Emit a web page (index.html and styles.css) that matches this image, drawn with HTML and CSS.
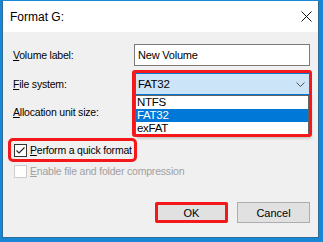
FILE: index.html
```html
<!DOCTYPE html>
<html lang="en">
<head>
  <meta charset="UTF-8" />
  <title>Format G:</title>
  <link rel="stylesheet" href="styles.css">
</head>
<body>
  <div class="window">
    <div class="titlebar">
      <span class="title">Format G:</span>
      <svg class="close" width="11" height="11" viewBox="0 0 11 11">
        <path d="M0.5 0.5 L10.5 10.5 M10.5 0.5 L0.5 10.5" stroke="#111" stroke-width="1" fill="none"/>
      </svg>
    </div>

    <div class="content">
      <div class="row row-volume">
        <label class="label"><u>V</u>olume label:</label>
        <div class="textbox">New Volume</div>
      </div>

      <div class="row row-fs">
        <label class="label"><u>F</u>ile system:</label>
        <div class="combo-wrap">
          <div class="combo">
            <span>FAT32</span>
            <svg class="chevron" width="9" height="5" viewBox="0 0 9 5">
              <path d="M0.5 0.5 L4.5 4.5 L8.5 0.5" stroke="#555" stroke-width="1" fill="none"/>
            </svg>
          </div>
          <ul class="dropdown">
            <li>NTFS</li>
            <li class="selected">FAT32</li>
            <li>exFAT</li>
          </ul>
        </div>
      </div>

      <div class="row row-alloc">
        <label class="label"><u>A</u>llocation unit size:</label>
      </div>

      <div class="row row-quick">
        <label class="check highlight">
          <span class="box checked">
            <svg width="11" height="11" viewBox="0 0 11 11">
              <path d="M1.5 5.5 L4 8 L9.5 2.5" stroke="#222" stroke-width="1.1" fill="none"/>
            </svg>
          </span>
          <span><u>P</u>erform a quick format</span>
        </label>
      </div>

      <div class="row row-compress">
        <label class="check disabled">
          <span class="box"></span>
          <span><u>E</u>nable file and folder compression</span>
        </label>
      </div>

      <div class="buttons">
        <button class="btn btn-ok">OK</button>
        <button class="btn">Cancel</button>
      </div>
    </div>
  </div>
</body>
</html>
```

FILE: styles.css
```css
* {
  margin: 0;
  padding: 0;
  box-sizing: border-box;
}

body {
  background-color: #1787d6;
  font-family: 'Liberation Sans', Arial, sans-serif;
  font-size: 10.5px;
  letter-spacing: -0.2px;
  color: #000;
  overflow: hidden;
}

.window {
  margin: 1px 0 0 2px;
  width: 317px;
  height: 237px;
  border-left: 1px solid #2f6b97;
  border-right: 1px solid #2f6b97;
  border-bottom: 1px solid #2f6b97;
  background-color: #f0f0f0;
  display: flex;
  flex-direction: column;
}

.titlebar {
  height: 31px;
  background-color: #fff;
  display: flex;
  align-items: center;
  justify-content: space-between;
  padding: 0 6px 0 7px;
}

.title {
  font-size: 12px;
  letter-spacing: 0;
}

.close {
  display: block;
}

.content {
  flex: 1;
  padding: 12px 8px 0 10px;
  display: flex;
  flex-direction: column;
}

.row {
  display: flex;
  align-items: center;
  height: 22px;
}

.label {
  width: 121px;
}

.row-fs {
  margin-top: 7px;
}

.row-alloc {
  margin-top: 6px;
}

.row-quick {
  margin-top: 16px;
}

.row-compress {
  height: 20px;
}

.textbox {
  width: 176px;
  height: 22px;
  border: 1px solid #7a7a7a;
  background-color: #fff;
  padding: 0 3px;
  line-height: 20px;
  font-size: 11px;
}

.combo-wrap {
  position: relative;
  width: 175px;
  height: 22px;
  margin-left: 1px;
}

.combo {
  height: 22px;
  background-color: #cce4f7;
  border: 1px solid #0078d7;
  display: flex;
  align-items: center;
  justify-content: space-between;
  padding: 0 4px 0 2px;
  font-size: 11.5px;
  letter-spacing: -0.3px;
}

.chevron {
  display: block;
  margin-top: 1px;
}

.dropdown {
  position: absolute;
  top: 22px;
  left: 0;
  width: 174px;
  list-style: none;
  background-color: #fff;
  border: 1px solid #646464;
  box-shadow: 2px 2px 3px rgba(0, 0, 0, 0.25);
  z-index: 2;
}

.dropdown li {
  height: 13px;
  line-height: 13px;
  padding-left: 1px;
  font-size: 11.5px;
  letter-spacing: -0.3px;
}

.dropdown .selected {
  background-color: #0078d7;
  color: #fff;
}

.combo-wrap::after {
  content: '';
  position: absolute;
  top: -3px;
  left: -3px;
  right: -2px;
  bottom: -42px;
  border: 3px solid #f5181a;
  border-radius: 3px;
  z-index: 3;
}

.check {
  display: inline-flex;
  align-items: center;
  gap: 3px;
  height: 18px;
  padding: 0 2px 0 3px;
  margin-left: -2px;
}

.highlight {
  outline: 3px solid #f5181a;
  border-radius: 2px;
}

.box {
  width: 13px;
  height: 13px;
  border: 1px solid #333;
  background-color: #fff;
  display: flex;
  align-items: center;
  justify-content: center;
}

.disabled {
  color: #a0a0a0;
}

.disabled .box {
  border-color: #cccccc;
}

.buttons {
  display: flex;
  justify-content: flex-end;
  gap: 9px;
  margin-top: 21px;
}

.btn {
  width: 73px;
  height: 21px;
  background-color: #e1e1e1;
  border: 1px solid #adadad;
  font-family: 'Liberation Sans', Arial, sans-serif;
  font-size: 11px;
  color: #000;
}

.btn-ok {
  outline: 3px solid #f5181a;
  outline-offset: -3px;
  border-radius: 2px;
}
```
